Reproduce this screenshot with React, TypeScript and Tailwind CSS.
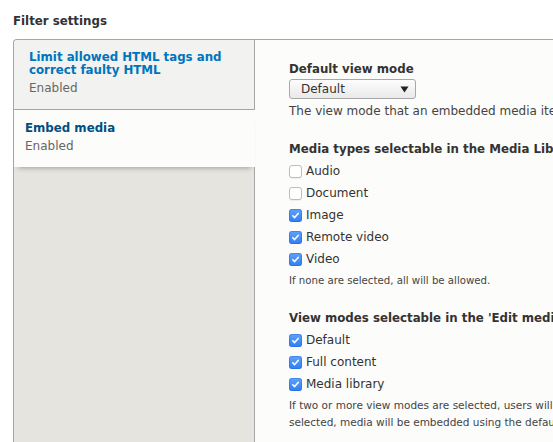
import React from 'react';

const MEDIA_TYPES = [
  { label: 'Audio', checked: false },
  { label: 'Document', checked: false },
  { label: 'Image', checked: true },
  { label: 'Remote video', checked: true },
  { label: 'Video', checked: true },
];

const VIEW_MODES = [
  { label: 'Default', checked: true },
  { label: 'Full content', checked: true },
  { label: 'Media library', checked: true },
];

function Checkbox({ checked }: { checked: boolean }) {
  if (checked) {
    return (
      <span className="flex h-[13px] w-[13px] shrink-0 items-center justify-center rounded-[3px] bg-gradient-to-b from-[#5fa2fb] to-[#2f7df6] shadow-[inset_0_0_0_1px_rgba(30,90,200,0.35)]">
        <svg width="9" height="9" viewBox="0 0 9 9" fill="none">
          <path d="M1.8 4.8 L3.6 6.6 L7.2 2.4" stroke="white" strokeWidth="1.6" strokeLinecap="round" strokeLinejoin="round" />
        </svg>
      </span>
    );
  }
  return (
    <span className="block h-[13px] w-[13px] shrink-0 rounded-[3px] border border-[#bdbdbd] bg-white shadow-[0_1px_1px_rgba(0,0,0,0.06)]" />
  );
}

function CheckRow({ label, checked }: { label: string; checked: boolean }) {
  return (
    <div className="flex h-[22px] items-center gap-[4px] text-[12px] text-[#333]">
      <Checkbox checked={checked} />
      <span>{label}</span>
    </div>
  );
}

export default function App() {
  return (
    <div className="h-[442px] w-[553px] overflow-hidden bg-white font-['DejaVu_Sans',sans-serif] text-[#333] whitespace-nowrap">
      <h2 className="px-[13px] pt-[13px] text-[11.8px] font-bold leading-[16px] text-[#333]">Filter settings</h2>

      <div className="ml-[13px] mt-[10px] flex h-[500px] w-[800px] rounded-tl-[4px] border-l border-t border-[#a6a6a6]">
        {/* Tabs */}
        <ul className="w-[241px] shrink-0 rounded-tl-[4px] border-r border-[#a6a6a6] bg-[#e6e4df]">
          <li className="rounded-tl-[4px] border-b border-[#a6a6a6] bg-[#f2f2f0] pb-[12px] pl-[15px] pt-[11px]">
            <div className="text-[11.8px] font-bold leading-[13px] text-[#0074bd]">
              Limit allowed HTML tags and
              <br />
              correct faulty HTML
            </div>
            <div className="mt-[2px] text-[12px] leading-[18px] text-[#666]">Enabled</div>
          </li>
          <li className="relative -mr-px bg-[#fcfcfa] pb-[12px] pl-[11px] pt-[10px] shadow-[0_5px_5px_-4px_rgba(0,0,0,0.3)]">
            <div className="text-[11.8px] font-bold leading-[16px] text-[#004f80]">Embed media</div>
            <div className="mt-[1px] text-[12px] leading-[18px] text-[#666]">Enabled</div>
          </li>
        </ul>

        {/* Pane */}
        <div className="flex-1 bg-[#fcfcfa] pl-[34px] pt-[21px]">
          <div className="text-[11.8px] font-bold leading-[16px]">Default view mode</div>
          <div className="mt-[2px] flex h-[20px] w-[127px] items-center justify-between rounded-[3px] border border-[#a8a8a8] bg-gradient-to-b from-[#fdfdfd] to-[#e9e9e9] pl-[11px] pr-[6px] text-[12px] text-[#333]">
            <span>Default</span>
            <svg width="9" height="7" viewBox="0 0 9 7">
              <path d="M0.5 0.5 H8.5 L4.5 6.5 Z" fill="#222" />
            </svg>
          </div>
          <div className="mt-[4px] text-[12px] leading-[16px] text-[#444]">
            The view mode that an embedded media item should be displayed in by default.
          </div>

          <div className="mt-[22px] text-[11.8px] font-bold leading-[16px]">
            Media types selectable in the Media Library
          </div>
          <div className="mt-[3px]">
            {MEDIA_TYPES.map((m) => (
              <CheckRow key={m.label} label={m.label} checked={m.checked} />
            ))}
          </div>
          <div className="mt-[3px] text-[10.2px] leading-[16px] text-[#444]">If none are selected, all will be allowed.</div>

          <div className="mt-[21px] text-[11.8px] font-bold leading-[16px]">
            View modes selectable in the 'Edit media' dialog
          </div>
          <div className="mt-[3px]">
            {VIEW_MODES.map((m) => (
              <CheckRow key={m.label} label={m.label} checked={m.checked} />
            ))}
          </div>
          <div className="mt-[2px] text-[10.5px] leading-[17px] text-[#444]">
            If two or more view modes are selected, users will be able to update the view mode that an embedded media item
            <br />
            selected, media will be embedded using the default view mode.
          </div>
        </div>
      </div>
    </div>
  );
}
